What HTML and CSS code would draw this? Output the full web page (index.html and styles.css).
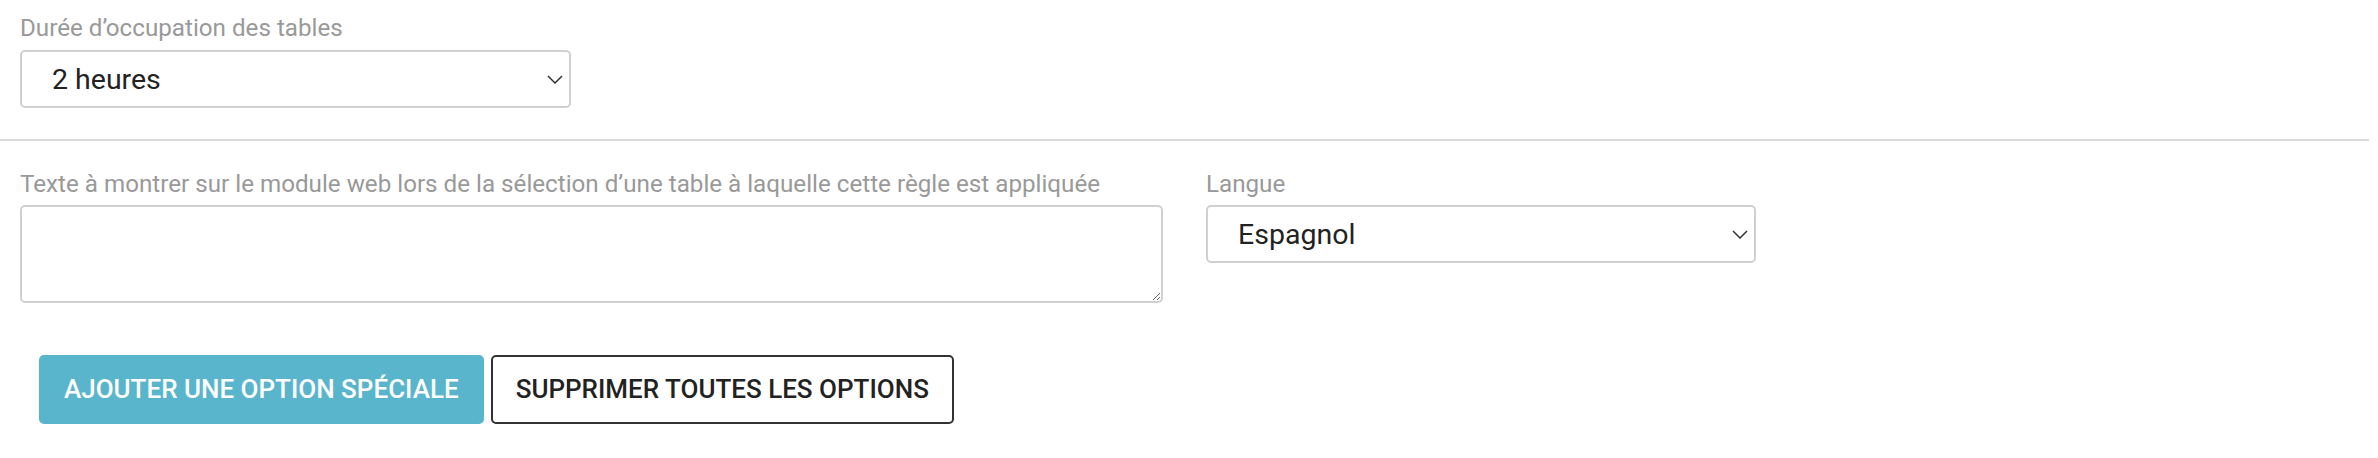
FILE: index.html
```html
<!DOCTYPE html>
<html lang="fr">
<head>
  <meta charset="UTF-8" />
  <meta name="viewport" content="width=device-width, initial-scale=1" />
  <title>Règle de réservation</title>
  <link rel="stylesheet" href="styles.css">
</head>
<body>

  <div class="form">

    <div class="group group-top">
      <label class="field-label" for="duree">Durée d’occupation des tables</label>
      <div class="select-wrap select-short">
        <select id="duree" class="field-select">
          <option>2 heures</option>
        </select>
        <svg class="chevron" width="16" height="9" viewBox="0 0 16 9" aria-hidden="true">
          <polyline points="1,1 8,8 15,1" fill="none" stroke="#333" stroke-width="1.5" />
        </svg>
      </div>
    </div>

    <hr class="divider">

    <div class="group group-row">
      <div class="field field-text">
        <label class="field-label" for="texte">Texte à montrer sur le module web lors de la sélection d’une table à laquelle cette règle est appliquée</label>
        <textarea id="texte" class="field-textarea"></textarea>
      </div>
      <div class="field field-lang">
        <label class="field-label" for="langue">Langue</label>
        <div class="select-wrap">
          <select id="langue" class="field-select">
            <option>Espagnol</option>
          </select>
          <svg class="chevron" width="16" height="9" viewBox="0 0 16 9" aria-hidden="true">
            <polyline points="1,1 8,8 15,1" fill="none" stroke="#333" stroke-width="1.5" />
          </svg>
        </div>
      </div>
    </div>

    <div class="actions">
      <button class="btn btn-primary">AJOUTER UNE OPTION SPÉCIALE</button>
      <button class="btn btn-outline">SUPPRIMER TOUTES LES OPTIONS</button>
    </div>

  </div>

</body>
</html>
```
FILE: styles.css
```css
* {
  box-sizing: border-box;
}
body {
  margin: 0;
  background: #fff;
  font-family: 'Roboto', 'Liberation Sans', sans-serif;
  color: #222;
}

.group-top {
  padding: 14px 0 0 20px;
}
.group-row {
  display: flex;
  align-items: flex-start;
  gap: 43px;
  padding: 29px 0 0 20px;
}

.field-label {
  display: block;
  font-size: 24.2px;
  line-height: 28px;
  color: #999;
  margin-bottom: 8px;
  white-space: nowrap;
}
.field-text .field-label,
.field-lang .field-label {
  margin-bottom: 7px;
}

/* selects */
.select-wrap {
  position: relative;
  width: 550px;
}
.select-short {
  width: 551px;
}
.field-select {
  appearance: none;
  -webkit-appearance: none;
  display: block;
  width: 100%;
  height: 58px;
  margin: 0;
  padding: 0 40px 0 30px;
  font-family: inherit;
  font-size: 28.5px;
  color: #222;
  background: #fff;
  border: 2px solid #d0d0d0;
  border-radius: 5px;
}
.chevron {
  position: absolute;
  right: 8px;
  top: 25px;
  pointer-events: none;
}

.field-textarea {
  display: block;
  width: 1143px;
  height: 98px;
  margin: 0;
  padding: 8px 12px;
  font-family: inherit;
  font-size: 24px;
  border: 2px solid #d0d0d0;
  border-radius: 5px;
  resize: vertical;
}

.divider {
  border: 0;
  height: 2px;
  background: #dcdcdc;
  margin: 31px 9px 0 0;
}

/* boutons */
.actions {
  display: flex;
  gap: 7px;
  padding: 52px 0 0 39px;
}
.btn {
  font-family: inherit;
  font-size: 26px;
  font-weight: 500;
  line-height: 31px;
  padding: 17px 23px;
  border: 2px solid transparent;
  border-radius: 5px;
  cursor: pointer;
  white-space: nowrap;
}
.btn-primary {
  background: #59b5cb;
  border-color: #59b5cb;
  color: #fff;
}
.btn-outline {
  background: #fff;
  border-color: #333;
  color: #222;
}
```
